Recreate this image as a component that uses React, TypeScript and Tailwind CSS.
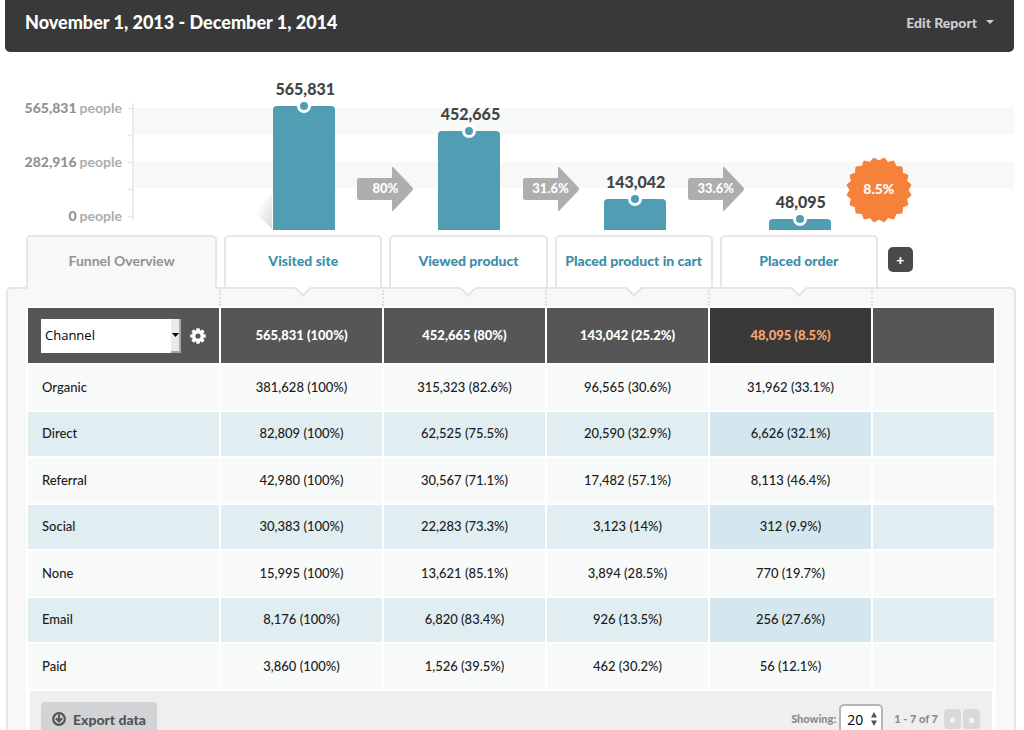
import React from "react";

type Step = { name: string; count: number; next: string };

const steps: Step[] = [
  { name: "Visited site", count: 565831, next: "80%" },
  { name: "Viewed product", count: 452665, next: "31.6%" },
  { name: "Placed product in cart", count: 143042, next: "33.6%" },
  { name: "Placed order", count: 48095, next: "" },
];

const totals = ["565,831 (100%)", "452,665 (80%)", "143,042 (25.2%)", "48,095 (8.5%)"];

const rows: string[][] = [
  ["Organic", "381,628 (100%)", "315,323 (82.6%)", "96,565 (30.6%)", "31,962 (33.1%)"],
  ["Direct", "82,809 (100%)", "62,525 (75.5%)", "20,590 (32.9%)", "6,626 (32.1%)"],
  ["Referral", "42,980 (100%)", "30,567 (71.1%)", "17,482 (57.1%)", "8,113 (46.4%)"],
  ["Social", "30,383 (100%)", "22,283 (73.3%)", "3,123 (14%)", "312 (9.9%)"],
  ["None", "15,995 (100%)", "13,621 (85.1%)", "3,894 (28.5%)", "770 (19.7%)"],
  ["Email", "8,176 (100%)", "6,820 (83.4%)", "926 (13.5%)", "256 (27.6%)"],
  ["Paid", "3,860 (100%)", "1,526 (39.5%)", "462 (30.2%)", "56 (12.1%)"],
];

const BAR_MAX = 124;
const columns = "grid grid-cols-[191fr_158fr_158fr_158fr_158fr_131fr] gap-x-[7px] pl-[20px]";

// Seal outline with 20 teeth.
const sealPoints = Array.from({ length: 40 }, (_, i) => {
  const r = i % 2 === 0 ? 32.5 : 29;
  const a = ((i + 1) * Math.PI) / 20;
  return `${(33 + r * Math.cos(a)).toFixed(1)},${(33 + r * Math.sin(a)).toFixed(1)}`;
}).join(" ");

function Arrow({ label }: { label: string }) {
  return (
    <div className="absolute bottom-[18px] left-full z-10 ml-[3px] flex h-[46px] w-[57px] -translate-x-1/2 items-center">
      <svg viewBox="0 0 57 46" className="absolute inset-0 size-full" aria-hidden="true">
        <path
          d="M3 12H35.500V2Q35.500 0 37 1.500L56 21.500Q57 23 56 24.500L37 44.500Q35.500 46 35.500 44V34H3Q0.500 34 0.500 31.500V14.500Q0.500 12 3 12Z"
          fill="#aeaeae"
        />
      </svg>
      <span className="relative w-full text-center text-[13px] font-black text-white">{label}</span>
    </div>
  );
}

function Seal() {
  return (
    <div className="absolute bottom-[7px] left-full z-10 ml-[1px] flex size-[66px] -translate-x-1/2 items-center justify-center pb-[4px]">
      <svg viewBox="0 0 66 66" className="absolute inset-0 size-full" aria-hidden="true">
        <polygon points={sealPoints} fill="#f6813a" stroke="#f6813a" strokeLinejoin="round" />
      </svg>
      <span className="relative text-[14px] font-black text-white">8.5%</span>
    </div>
  );
}

function Axis() {
  return (
    <div className="mb-[5px] flex h-[126px] w-[96px] flex-col justify-between self-end text-right text-[14px] font-bold leading-[18px] text-[#acacac]">
      {["565,831", "282,916", "0"].map((n) => (
        <span key={n} className="flex justify-end gap-[3px] whitespace-nowrap">
          <span className="font-black text-[#929292]">{n}</span>
          <span>people</span>
        </span>
      ))}
    </div>
  );
}

function Chart() {
  return (
    <section className="grid" aria-label="Funnel chart">
      <div className="col-start-1 row-start-1 flex items-end pr-[2px] pb-[10px] pl-[121px]" aria-hidden="true">
        <svg width="7" height="117" viewBox="0 0 7 117" className="shrink-0">
          <path d="M6 0V117M1 5.500H6M1 32.500H6M1 59.500H6M1 86.500H6M1 113.500H6" stroke="#e6e6e6" strokeWidth="1.500" fill="none" />
        </svg>
        <div className="flex h-[112px] grow flex-col">
          <div className="h-[26px] bg-[#f7f9f8]" />
          <div className="h-[28px]" />
          <div className="h-[26px] bg-[#f7f9f8]" />
        </div>
      </div>
      <div className={`col-start-1 row-start-1 h-[178px] ${columns}`}>
        <Axis />
        {steps.map((s, i) => (
          <div key={s.name} className="relative flex flex-col items-center justify-end pl-[2px]">
            <span className="mb-[7px] pl-[2px] text-[16px] font-black leading-[20px] text-[#444]">
              {s.count.toLocaleString("en-US")}
            </span>
            <div
              className="relative flex w-[62px] justify-center rounded-t-[4px] bg-[#509db4]"
              style={{ height: Math.round((s.count / steps[0].count) * BAR_MAX) }}
            >
              {i === 0 && (
                <svg width="18" height="36" viewBox="0 0 18 36" className="absolute right-full bottom-0" aria-hidden="true">
                  <defs>
                    <linearGradient id="shade" x1="1" y1="0.900" x2="0.300" y2="0.200">
                      <stop offset="0" stopColor="#dcdcdc" />
                      <stop offset="1" stopColor="#ffffff" />
                    </linearGradient>
                  </defs>
                  <path d="M17 0V35L0 18Z" fill="url(#shade)" />
                </svg>
              )}
              <span className="absolute -top-[7px] size-[14px] rounded-full border-[3px] border-white bg-[#509db4]" />
            </div>
            {s.next ? <Arrow label={s.next} /> : <Seal />}
          </div>
        ))}
      </div>
    </section>
  );
}

function Tabs() {
  return (
    <nav className={`relative z-10 mt-[5px] -mb-[2px] ${columns} text-[14px] font-black`} aria-label="Funnel steps">
      <a
        href="#overview"
        className="flex h-[54px] items-center justify-center rounded-t-[5px] border-2 border-b-0 border-[#e6e6e6] bg-[#f8f8f8] pb-[5px] font-bold text-[#929292]"
      >
        Funnel Overview
      </a>
      {steps.map((s) => (
        <a
          key={s.name}
          href="#step"
          className="relative flex h-[54px] items-center justify-center whitespace-nowrap rounded-t-[5px] border-2 border-[#e6e6e6] bg-white pb-[3px] text-[#3d8ea9]"
        >
          {s.name}
          <svg width="16" height="10" viewBox="0 0 16 10" className="absolute top-[50px]" aria-hidden="true">
            <path d="M0 0H16L8 8Z" fill="#fff" />
            <path d="M0.500 1L8 8.500L15.500 1" fill="none" stroke="#e3e3e3" strokeWidth="2" />
          </svg>
        </a>
      ))}
      <div className="flex items-center pb-[5px] pl-[3px]">
        <button type="button" aria-label="Add step" className="size-[25px] rounded-[5px] bg-[#4a4a4a] text-[14px] leading-none text-white">
          +
        </button>
      </div>
    </nav>
  );
}

const divider =
  "relative before:absolute before:-left-[2px] before:-top-[18px] before:h-[16px] before:border-l-2 before:border-dotted before:border-[#dfdfdf] before:content-['']";

function FunnelTable() {
  return (
    <table className="w-full table-fixed border-separate border-spacing-[2px] bg-white text-[13px] text-[#1c1c1c]">
      <colgroup>
        <col className="w-[191px]" />
        <col className="w-[161px]" />
        <col className="w-[161px]" />
        <col className="w-[161px]" />
        <col className="w-[161px]" />
        <col />
      </colgroup>
      <thead>
        <tr className="h-[55px] text-white">
          <th scope="col" className="bg-[#565656] p-0">
            <div className="flex items-center pl-[13px]">
              <div className="relative grid w-[140px]">
                <select
                  aria-label="Group by"
                  className="h-[34px] appearance-none bg-white pl-[4px] font-['Open_Sans','Noto_Sans',sans-serif] text-[13px] font-normal text-black"
                >
                  <option>Channel</option>
                </select>
                <span
                  className="pointer-events-none absolute inset-y-0 right-0 flex w-[10px] items-center justify-center border-r-2 border-b-2 border-[#a9a9a9] bg-[#ebebeb]"
                  aria-hidden="true"
                >
                  <svg width="7" height="4" viewBox="0 0 7 4">
                    <path d="M0 0H7L3.500 4Z" fill="#000" />
                  </svg>
                </span>
              </div>
              <button type="button" aria-label="Settings" className="ml-[9px]">
                <svg width="16" height="16" viewBox="-8 -8 16 16" aria-hidden="true">
                  <g fill="#fff">
                    {[0, 45, 90, 135].map((a) => (
                      <rect key={a} x="-1.800" y="-7.800" width="3.600" height="15.600" rx="0.800" transform={`rotate(${a})`} />
                    ))}
                    <circle r="6" />
                  </g>
                  <circle r="2.600" fill="#565656" />
                </svg>
              </button>
            </div>
          </th>
          {totals.map((t, i) => (
            <th
              key={t}
              scope="col"
              className={`p-0 font-black ${divider} ${i === 3 ? "bg-[#393939] text-[#f9a66c]" : "bg-[#565656]"}`}
            >
              {t}
            </th>
          ))}
          <td className={`bg-[#565656] ${divider}`} />
        </tr>
      </thead>
      <tbody>
        {rows.map((r) => (
          <tr key={r[0]} className="group odd:h-[45px] even:h-[44px] odd:bg-[#f8faf9] even:bg-[#e0eef2]">
            <th scope="row" className="p-0 pl-[14px] text-left font-medium">
              {r[0]}
            </th>
            {r.slice(1).map((c, i) => (
              <td key={c} className={`p-0 text-center font-medium ${i === 3 ? "group-even:bg-[#d4e6ee]" : ""}`}>
                {c}
              </td>
            ))}
            <td />
          </tr>
        ))}
      </tbody>
    </table>
  );
}

function Footer() {
  return (
    <div className="bg-white px-[4px]">
      <div className="flex items-start justify-between bg-[#efefef] pt-[11px] pr-[12px] pb-[12px] pl-[11px] text-[11px] font-black text-[#8b8b8b]">
        <button type="button" className="flex h-[34px] items-center gap-[7px] rounded-[4px] bg-[#d2d3d5] px-[11px] text-[14px] text-[#555]">
          <svg width="14" height="14" viewBox="0 0 14 14" aria-hidden="true">
            <circle cx="7" cy="7" r="5.800" fill="none" stroke="#555" strokeWidth="2.200" />
            <path d="M7 2.500V9.500M3.800 6.300L7 9.500L10.200 6.300" fill="none" stroke="#555" strokeWidth="2" />
          </svg>
          Export data
        </button>
        <div className="flex items-center pt-[2px]">
          <label htmlFor="size">Showing:</label>
          <div className="relative ml-[3px]">
            <select
              id="size"
              className="h-[30px] w-[44px] appearance-none rounded-[5px] border-2 border-[#b5b5b5] bg-white pl-[6px] font-['Open_Sans','Noto_Sans',sans-serif] text-[14px] font-medium text-black"
            >
              <option>20</option>
            </select>
            <svg width="6" height="14" viewBox="0 0 6 14" className="pointer-events-none absolute top-[8px] right-[6px]" aria-hidden="true">
              <path d="M3 0L6 5.500H0ZM3 14L6 8.500H0Z" fill="#555" />
            </svg>
          </div>
          <span className="ml-[11px]">1 - 7 of 7</span>
          <button type="button" aria-label="Previous page" className="ml-[6px] h-[20px] w-[17px] rounded-[4px] bg-[#d9d9d9] text-[13px] leading-none text-white">
            «
          </button>
          <button type="button" aria-label="Next page" className="ml-[2px] h-[20px] w-[17px] rounded-[4px] bg-[#d9d9d9] text-[13px] leading-none text-white">
            »
          </button>
        </div>
      </div>
    </div>
  );
}

export default function App() {
  return (
    <div className="bg-white pr-[8px] pl-[5px] font-['Lato','Liberation_Sans',sans-serif]">
      <header className="mr-[2px] flex h-[52px] items-center justify-between rounded-b-[5px] bg-[#393939] pr-[20px] pb-[8px] pl-[20px]">
        <h1 className="text-[18px] font-black text-white">November 1, 2013 - December 1, 2014</h1>
        <button type="button" className="flex items-center gap-[9px] text-[14px] font-black text-[#cfcfcf]">
          Edit Report
          <svg width="8" height="4" viewBox="0 0 8 4" aria-hidden="true">
            <path d="M0 0H8L4 4Z" fill="#cfcfcf" />
          </svg>
        </button>
      </header>
      <main className="pl-px">
        <Chart />
        <Tabs />
        <section className="rounded-t-[5px] border-2 border-b-0 border-[#e6e6e6] bg-[#f8f8f8] px-[18px]">
          <div className="bg-[#f7f9f8] pt-[17px]">
            <FunnelTable />
            <Footer />
          </div>
        </section>
      </main>
    </div>
  );
}
